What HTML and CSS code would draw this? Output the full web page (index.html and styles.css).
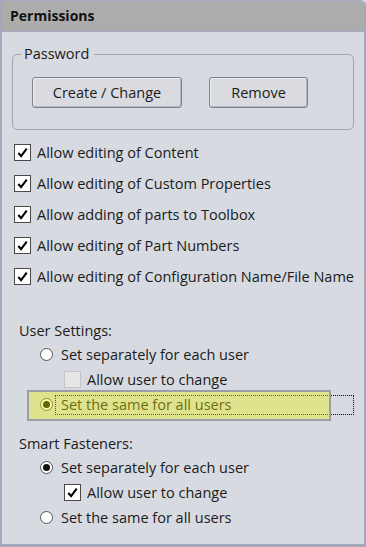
FILE: index.html
```html
<!DOCTYPE html>
<html lang="en">
<head>
  <meta charset="UTF-8">
  <title>Permissions</title>
  <link rel="stylesheet" href="styles.css">
</head>
<body>
  <div class="panel">
    <div class="panel-title">Permissions</div>
    <div class="panel-body">
      <fieldset class="group">
        <legend>Password</legend>
        <div class="group-buttons">
          <button class="btn btn-wide">Create / Change</button>
          <button class="btn">Remove</button>
        </div>
      </fieldset>

      <ul class="checks">
        <li><span class="box"><svg viewBox="0 0 16 16"><path d="M3.5 8.5 L6.5 11.8 L12.5 3.8"/></svg></span>Allow editing of Content</li>
        <li><span class="box"><svg viewBox="0 0 16 16"><path d="M3.5 8.5 L6.5 11.8 L12.5 3.8"/></svg></span>Allow editing of Custom Properties</li>
        <li><span class="box"><svg viewBox="0 0 16 16"><path d="M3.5 8.5 L6.5 11.8 L12.5 3.8"/></svg></span>Allow adding of parts to Toolbox</li>
        <li><span class="box"><svg viewBox="0 0 16 16"><path d="M3.5 8.5 L6.5 11.8 L12.5 3.8"/></svg></span>Allow editing of Part Numbers</li>
        <li><span class="box"><svg viewBox="0 0 16 16"><path d="M3.5 8.5 L6.5 11.8 L12.5 3.8"/></svg></span>Allow editing of Configuration Name/File Name</li>
      </ul>

      <div class="settings">
        <div class="settings-label">User Settings:</div>
        <div class="option"><span class="radio"></span>Set separately for each user</div>
        <div class="option sub"><span class="box disabled"></span>Allow user to change</div>
        <div class="option"><span class="radio on"></span><span class="focus">Set the same for all users</span></div>
        <div class="highlight"></div>
      </div>

      <div class="settings">
        <div class="settings-label">Smart Fasteners:</div>
        <div class="option"><span class="radio on"></span>Set separately for each user</div>
        <div class="option sub"><span class="box"><svg viewBox="0 0 16 16"><path d="M3.5 8.5 L6.5 11.8 L12.5 3.8"/></svg></span>Allow user to change</div>
        <div class="option"><span class="radio"></span>Set the same for all users</div>
      </div>
    </div>
  </div>
</body>
</html>
```

FILE: styles.css
```css
body {
  margin: 0;
  background: #d7dae0;
  font-family: 'Open Sans', 'Noto Sans', sans-serif;
  color: #1b1b1b;
}
.panel {
  width: 366px;
  height: 547px;
  box-sizing: border-box;
  border: 2px solid #a4a8bd;
  border-top-width: 1px;
  border-bottom-width: 3px;
  border-top-right-radius: 6px;
  background: #d7dae0;
  overflow: hidden;
}
.panel-title {
  height: 30px;
  line-height: 30px;
  padding-left: 8px;
  background: #acacac;
  border-bottom: 1px solid #a3a7bb;
  font-weight: bold;
  font-size: 14px;
  color: #111;
}
.panel-body {
  padding: 0 10px;
}
.group {
  margin: 13px 0 0;
  padding: 14px 0 21px 19px;
  border: 1px solid #a2a6b3;
  border-radius: 5px;
  min-width: 0;
}
.group legend {
  margin-left: -11px;
  padding: 0 5px 0 3px;
  font-size: 14.5px;
  line-height: 18px;
}
.group-buttons {
  display: flex;
  gap: 27px;
}
.btn {
  height: 31px;
  width: 99px;
  font-family: inherit;
  font-size: 14.5px;
  color: #1b1b1b;
  background: #d9dbe0;
  border: 1px solid #808185;
  border-radius: 3px;
  box-shadow: inset 1px 1px 0 #eceef1, inset -1px -1px 0 #b6b8be;
}
.btn-wide {
  width: 150px;
}
.checks {
  list-style: none;
  margin: 7px 0 0;
  padding: 0 0 0 2px;
}
.checks li {
  display: flex;
  align-items: center;
  gap: 6px;
  height: 31px;
  font-size: 14.5px;
}
.box {
  width: 15px;
  height: 15px;
  border: 1px solid #4a4a4a;
  background: #fff;
  flex: none;
  display: flex;
}
.box svg {
  width: 15px;
  height: 15px;
  fill: none;
  stroke: #000;
  stroke-width: 2.2;
}
.box.disabled {
  background: #e6e6e6;
  border-color: #c5c5c5;
}
.settings {
  position: relative;
  margin-top: 27px;
  padding-left: 7px;
}
.settings + .settings {
  margin-top: 15px;
}
.settings-label {
  display: flex;
  align-items: center;
  height: 23px;
  font-size: 14.5px;
}
.option {
  display: flex;
  align-items: center;
  height: 25px;
  font-size: 14.5px;
  padding-left: 21px;
  gap: 8px;
}
.option.sub {
  padding-left: 45px;
  gap: 6px;
}
.radio {
  width: 11px;
  height: 11px;
  border: 1px solid #555;
  border-radius: 50%;
  background: #fff;
  flex: none;
  position: relative;
}
.radio.on::after {
  content: "";
  position: absolute;
  left: 2px;
  top: 2px;
  width: 7px;
  height: 7px;
  border-radius: 50%;
  background: #111;
}
.focus {
  flex: 1;
  margin-left: -6px;
  padding-left: 5px;
  line-height: 18px;
  border: 1px dotted #111;
}
.highlight {
  position: absolute;
  left: 15px;
  top: 71px;
  width: 300px;
  height: 27px;
  border: 2px solid #9b9ea6;
  background: rgba(240, 243, 0, 0.37);
}
```
